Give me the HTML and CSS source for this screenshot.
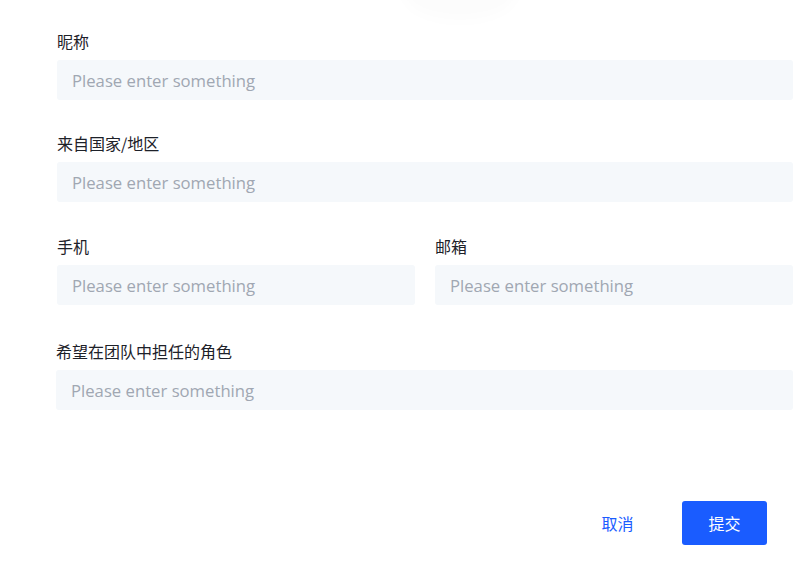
FILE: index.html
```html
<!DOCTYPE html>
<html lang="zh">
<head>
<meta charset="utf-8">
<link rel="stylesheet" href="styles.css">
</head>
<body>
<div class="glow"></div>
<form class="form">
  <div class="field">
    <label class="label">昵称</label>
    <input class="input" type="text" placeholder="Please enter something">
  </div>
  <div class="field">
    <label class="label">来自国家/地区</label>
    <input class="input" type="text" placeholder="Please enter something">
  </div>
  <div class="row">
    <div class="field">
      <label class="label">手机</label>
      <input class="input" type="text" placeholder="Please enter something">
    </div>
    <div class="field">
      <label class="label">邮箱</label>
      <input class="input" type="text" placeholder="Please enter something">
    </div>
  </div>
  <div class="field field-last">
    <label class="label">希望在团队中担任的角色</label>
    <input class="input" type="text" placeholder="Please enter something">
  </div>
  <div class="footer">
    <button type="button" class="btn btn-text">取消</button>
    <button type="button" class="btn btn-primary">提交</button>
  </div>
</form>
</body>
</html>
```
FILE: styles.css
```css
* { box-sizing: border-box; }
html, body { margin: 0; background: #fff; }
body {
  width: 811px;
  height: 572px;
  overflow: hidden;
  position: relative;
  font-family: "Noto Sans CJK SC", "Noto Sans", sans-serif;
}
.glow {
  position: absolute;
  left: 405px;
  top: -30px;
  width: 110px;
  height: 50px;
  border-radius: 50%;
  background: rgba(0, 0, 0, 0.012);
  filter: blur(6px);
}
.form {
  padding: 30px 18px 0 57px;
  display: flex;
  flex-direction: column;
  gap: 32px;
}
.field {
  display: flex;
  flex-direction: column;
  gap: 8px;
  flex: 1;
}
.field-last { margin-top: 3px; margin-left: -1px; }
.label {
  font-size: 16px;
  line-height: 22px;
  color: #1d2129;
}
.row {
  display: flex;
  gap: 20px;
  margin-top: 1px;
}
.input {
  height: 40px;
  border: none;
  outline: none;
  border-radius: 3px;
  background: #f5f8fb;
  padding: 1px 15px 0;
  font-family: "Open Sans", sans-serif;
  font-size: 16.7px;
  color: #1d2129;
  width: 100%;
}
.input::placeholder { color: #a0a7b2; }
.footer {
  display: flex;
  justify-content: flex-end;
  gap: 22px;
  margin-top: 59px;
  margin-right: 26px;
}
.btn {
  width: 85px;
  height: 44px;
  border: none;
  border-radius: 3px;
  font-family: "Noto Sans CJK SC", sans-serif;
  font-size: 16px;
  cursor: pointer;
}
.btn-text { background: transparent; color: #1a5cff; }
.btn-primary { background: #1a5cff; color: #fff; }
```
